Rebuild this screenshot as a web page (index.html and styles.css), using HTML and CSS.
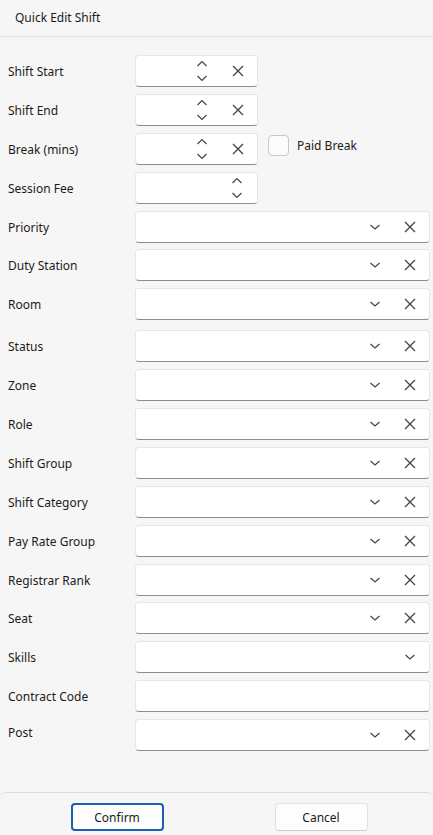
FILE: index.html
```html
<!DOCTYPE html>
<html>
<head>
<meta charset="utf-8">
<link rel="stylesheet" href="styles.css">
</head>
<body>
<div class="dialog">
  <div class="header">Quick Edit Shift</div>
  <div class="form">
    <div class="row">
      <span class="label">Shift Start</span>
      <div class="box spin"><span class="grow"></span>
        <svg class="updown" width="12" height="22" viewBox="0 0 12 22"><path d="M1.5 6 L6 1.5 L10.5 6 M1.5 16 L6 20.5 L10.5 16" fill="none" stroke="#444" stroke-width="1.2"/></svg>
        <svg class="clear" width="12" height="12" viewBox="0 0 12 12"><path d="M1 1 L11 11 M11 1 L1 11" fill="none" stroke="#444" stroke-width="1.3"/></svg>
      </div>
    </div>
    <div class="row">
      <span class="label">Shift End</span>
      <div class="box spin"><span class="grow"></span>
        <svg class="updown" width="12" height="22" viewBox="0 0 12 22"><path d="M1.5 6 L6 1.5 L10.5 6 M1.5 16 L6 20.5 L10.5 16" fill="none" stroke="#444" stroke-width="1.2"/></svg>
        <svg class="clear" width="12" height="12" viewBox="0 0 12 12"><path d="M1 1 L11 11 M11 1 L1 11" fill="none" stroke="#444" stroke-width="1.3"/></svg>
      </div>
    </div>
    <div class="row">
      <span class="label">Break (mins)</span>
      <div class="inline">
        <div class="box spin"><span class="grow"></span>
          <svg class="updown" width="12" height="22" viewBox="0 0 12 22"><path d="M1.5 6 L6 1.5 L10.5 6 M1.5 16 L6 20.5 L10.5 16" fill="none" stroke="#444" stroke-width="1.2"/></svg>
          <svg class="clear" width="12" height="12" viewBox="0 0 12 12"><path d="M1 1 L11 11 M11 1 L1 11" fill="none" stroke="#444" stroke-width="1.3"/></svg>
        </div>
        <label class="check"><span class="checkbox"></span><span>Paid Break</span></label>
      </div>
    </div>
    <div class="row">
      <span class="label">Session Fee</span>
      <div class="box spin fee"><span class="grow"></span>
        <svg class="updown" width="12" height="22" viewBox="0 0 12 22"><path d="M1.5 6 L6 1.5 L10.5 6 M1.5 16 L6 20.5 L10.5 16" fill="none" stroke="#444" stroke-width="1.2"/></svg>
      </div>
    </div>
    <div class="row"><span class="label">Priority</span>
      <div class="box combo"><span class="grow"></span>
        <svg class="down" width="12" height="8" viewBox="0 0 12 8"><path d="M1.5 2 L6 6 L10.5 2" fill="none" stroke="#444" stroke-width="1.2"/></svg>
        <svg class="clear" width="12" height="12" viewBox="0 0 12 12"><path d="M1 1 L11 11 M11 1 L1 11" fill="none" stroke="#444" stroke-width="1.3"/></svg>
      </div></div>
    <div class="row"><span class="label">Duty Station</span>
      <div class="box combo"><span class="grow"></span>
        <svg class="down" width="12" height="8" viewBox="0 0 12 8"><path d="M1.5 2 L6 6 L10.5 2" fill="none" stroke="#444" stroke-width="1.2"/></svg>
        <svg class="clear" width="12" height="12" viewBox="0 0 12 12"><path d="M1 1 L11 11 M11 1 L1 11" fill="none" stroke="#444" stroke-width="1.3"/></svg>
      </div></div>
    <div class="row room"><span class="label">Room</span>
      <div class="box combo"><span class="grow"></span>
        <svg class="down" width="12" height="8" viewBox="0 0 12 8"><path d="M1.5 2 L6 6 L10.5 2" fill="none" stroke="#444" stroke-width="1.2"/></svg>
        <svg class="clear" width="12" height="12" viewBox="0 0 12 12"><path d="M1 1 L11 11 M11 1 L1 11" fill="none" stroke="#444" stroke-width="1.3"/></svg>
      </div></div>
    <div class="row"><span class="label">Status</span>
      <div class="box combo"><span class="grow"></span>
        <svg class="down" width="12" height="8" viewBox="0 0 12 8"><path d="M1.5 2 L6 6 L10.5 2" fill="none" stroke="#444" stroke-width="1.2"/></svg>
        <svg class="clear" width="12" height="12" viewBox="0 0 12 12"><path d="M1 1 L11 11 M11 1 L1 11" fill="none" stroke="#444" stroke-width="1.3"/></svg>
      </div></div>
    <div class="row"><span class="label">Zone</span>
      <div class="box combo"><span class="grow"></span>
        <svg class="down" width="12" height="8" viewBox="0 0 12 8"><path d="M1.5 2 L6 6 L10.5 2" fill="none" stroke="#444" stroke-width="1.2"/></svg>
        <svg class="clear" width="12" height="12" viewBox="0 0 12 12"><path d="M1 1 L11 11 M11 1 L1 11" fill="none" stroke="#444" stroke-width="1.3"/></svg>
      </div></div>
    <div class="row"><span class="label">Role</span>
      <div class="box combo"><span class="grow"></span>
        <svg class="down" width="12" height="8" viewBox="0 0 12 8"><path d="M1.5 2 L6 6 L10.5 2" fill="none" stroke="#444" stroke-width="1.2"/></svg>
        <svg class="clear" width="12" height="12" viewBox="0 0 12 12"><path d="M1 1 L11 11 M11 1 L1 11" fill="none" stroke="#444" stroke-width="1.3"/></svg>
      </div></div>
    <div class="row"><span class="label">Shift Group</span>
      <div class="box combo"><span class="grow"></span>
        <svg class="down" width="12" height="8" viewBox="0 0 12 8"><path d="M1.5 2 L6 6 L10.5 2" fill="none" stroke="#444" stroke-width="1.2"/></svg>
        <svg class="clear" width="12" height="12" viewBox="0 0 12 12"><path d="M1 1 L11 11 M11 1 L1 11" fill="none" stroke="#444" stroke-width="1.3"/></svg>
      </div></div>
    <div class="row"><span class="label">Shift Category</span>
      <div class="box combo"><span class="grow"></span>
        <svg class="down" width="12" height="8" viewBox="0 0 12 8"><path d="M1.5 2 L6 6 L10.5 2" fill="none" stroke="#444" stroke-width="1.2"/></svg>
        <svg class="clear" width="12" height="12" viewBox="0 0 12 12"><path d="M1 1 L11 11 M11 1 L1 11" fill="none" stroke="#444" stroke-width="1.3"/></svg>
      </div></div>
    <div class="row"><span class="label">Pay Rate Group</span>
      <div class="box combo"><span class="grow"></span>
        <svg class="down" width="12" height="8" viewBox="0 0 12 8"><path d="M1.5 2 L6 6 L10.5 2" fill="none" stroke="#444" stroke-width="1.2"/></svg>
        <svg class="clear" width="12" height="12" viewBox="0 0 12 12"><path d="M1 1 L11 11 M11 1 L1 11" fill="none" stroke="#444" stroke-width="1.3"/></svg>
      </div></div>
    <div class="row"><span class="label">Registrar Rank</span>
      <div class="box combo"><span class="grow"></span>
        <svg class="down" width="12" height="8" viewBox="0 0 12 8"><path d="M1.5 2 L6 6 L10.5 2" fill="none" stroke="#444" stroke-width="1.2"/></svg>
        <svg class="clear" width="12" height="12" viewBox="0 0 12 12"><path d="M1 1 L11 11 M11 1 L1 11" fill="none" stroke="#444" stroke-width="1.3"/></svg>
      </div></div>
    <div class="row"><span class="label">Seat</span>
      <div class="box combo"><span class="grow"></span>
        <svg class="down" width="12" height="8" viewBox="0 0 12 8"><path d="M1.5 2 L6 6 L10.5 2" fill="none" stroke="#444" stroke-width="1.2"/></svg>
        <svg class="clear" width="12" height="12" viewBox="0 0 12 12"><path d="M1 1 L11 11 M11 1 L1 11" fill="none" stroke="#444" stroke-width="1.3"/></svg>
      </div></div>
    <div class="row"><span class="label">Skills</span>
      <div class="box combo skills"><span class="grow"></span>
        <svg class="down" width="12" height="8" viewBox="0 0 12 8"><path d="M1.5 2 L6 6 L10.5 2" fill="none" stroke="#444" stroke-width="1.2"/></svg>
      </div></div>
    <div class="row"><span class="label">Contract Code</span>
      <div class="box combo"></div></div>
    <div class="row post"><span class="label">Post</span>
      <div class="box combo"><span class="grow"></span>
        <svg class="down" width="12" height="8" viewBox="0 0 12 8"><path d="M1.5 2 L6 6 L10.5 2" fill="none" stroke="#444" stroke-width="1.2"/></svg>
        <svg class="clear" width="12" height="12" viewBox="0 0 12 12"><path d="M1 1 L11 11 M11 1 L1 11" fill="none" stroke="#444" stroke-width="1.3"/></svg>
      </div></div>
  </div>
  <div class="footer">
    <button class="btn primary">Confirm</button>
    <button class="btn">Cancel</button>
  </div>
</div>
</body>
</html>
```
FILE: styles.css
```css
html, body {
  margin: 0;
  padding: 0;
  background: #f6f6f6;
}
body {
  font-family: "Noto Sans", "Open Sans", sans-serif;
  font-size: 12px;
  color: #1b1b1b;
}
.dialog {
  width: 433px;
  height: 835px;
  display: flex;
  flex-direction: column;
  background: #f6f6f6;
}
.header {
  height: 36px;
  line-height: 35px;
  padding-left: 15px;
  border-bottom: 1.5px solid #dedede;
  flex: none;
}
.form {
  flex: 1;
  display: flex;
  flex-direction: column;
  gap: 6.9px;
  padding: 18px 3px 0 8px;
}
.row {
  display: flex;
  align-items: center;
  height: 32px;
}
.row.room { margin-bottom: 3px; }
.row.post { align-items: flex-start; }
.row.post .label { margin-top: 4px; }
.label {
  width: 127px;
  flex: none;
  padding-top: 1px;
}
.inline {
  display: flex;
  align-items: center;
}
.box {
  box-sizing: border-box;
  height: 32px;
  background: #fff;
  border: 1px solid #e6e6e6;
  border-bottom: 1px solid #8d8d8d;
  border-radius: 4px;
  display: flex;
  align-items: center;
}
.spin {
  width: 123px;
  padding-right: 13px;
}
.combo {
  flex: 1;
  padding-right: 13px;
}
.grow { flex: 1; }
.updown { margin-right: 24px; }
.fee .updown { margin-right: 0; }
.fee { padding-right: 14px; }
.down { margin-right: 23px; }
.skills .down { margin-right: 0; }
.check {
  display: flex;
  align-items: center;
  margin-left: 10px;
  margin-top: -7px;
}
.checkbox {
  box-sizing: border-box;
  width: 21px;
  height: 21px;
  border: 1px solid #c8c8c8;
  border-radius: 4px;
  background: #fbfbfb;
  margin-right: 8px;
}
.footer {
  flex: none;
  height: 43px;
  border-top: 1.5px solid #dcdcdc;
  border-radius: 6px 6px 0 0;
  display: flex;
  justify-content: center;
  gap: 111px;
  padding: 10px 0 0 5px;
  box-sizing: border-box;
}
.btn {
  box-sizing: border-box;
  width: 93px;
  height: 28px;
  font-family: inherit;
  font-size: 12px;
  color: #1b1b1b;
  background: #fdfdfd;
  border: 1px solid #e2e2e2;
  border-bottom-color: #cfcfcf;
  border-radius: 4px;
  padding: 0;
}
.btn.primary {
  border: 2px solid #1a5fb4;
}
```
